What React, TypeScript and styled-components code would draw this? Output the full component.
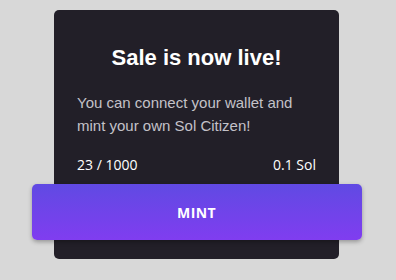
import styled, { createGlobalStyle } from 'styled-components'

const GlobalStyle = createGlobalStyle`
  html, body {
    margin: 0;
    padding: 0;
    background: #d8d8d8;
  }
`

const Page = styled.div`
  display: flex;
  justify-content: center;
  padding: 10px 3px 0 0;
`

const Card = styled.div`
  width: 285px;
  box-sizing: border-box;
  background: #221f28;
  border-radius: 5px;
  padding: 35px 23px 19px;
  display: flex;
  flex-direction: column;
  align-items: center;
`

const Title = styled.h2`
  margin: 0;
  align-self: stretch;
  font-family: 'Liberation Sans', Arial, sans-serif;
  font-size: 22px;
  line-height: 25px;
  font-weight: 700;
  color: #ffffff;
  text-align: center;
`

const Text = styled.p`
  margin: 21px 0 0;
  align-self: stretch;
  font-family: 'Liberation Sans', Arial, sans-serif;
  font-size: 15px;
  line-height: 23px;
  color: #c4c2c8;
`

const Stats = styled.div`
  align-self: stretch;
  display: flex;
  justify-content: space-between;
  margin-top: 18px;
  font-family: 'Open Sans', sans-serif;
  font-size: 14px;
  line-height: 20px;
  color: #ffffff;
`

const MintButton = styled.button`
  margin-top: 9px;
  width: calc(100% + 91px);
  flex-shrink: 0;
  height: 56px;
  border: none;
  border-radius: 5px;
  background: linear-gradient(180deg, #604ae3 0%, #803df0 100%);
  box-shadow: 0 2px 4px rgba(0, 0, 0, 0.3);
  color: #ffffff;
  font-family: 'Open Sans', sans-serif;
  font-size: 14px;
  font-weight: 700;
  letter-spacing: 0.4px;
  cursor: pointer;
`

export default function App() {
  return (
    <>
      <GlobalStyle />
      <Page>
        <Card>
          <Title>Sale is now live!</Title>
          <Text>You can connect your wallet and mint your own Sol Citizen!</Text>
          <Stats>
            <span>23 / 1000</span>
            <span>0.1 Sol</span>
          </Stats>
          <MintButton>MINT</MintButton>
        </Card>
      </Page>
    </>
  )
}
